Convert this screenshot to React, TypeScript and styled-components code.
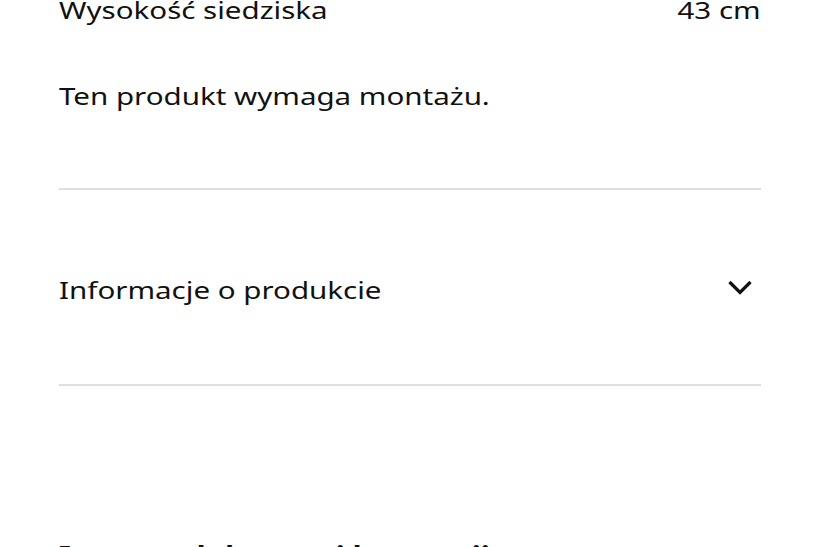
import React from "react";
import styled, { createGlobalStyle } from "styled-components";

const GlobalStyle = createGlobalStyle`
  html, body {
    margin: 0;
    padding: 0;
    background: #ffffff;
    overflow: hidden;
  }
  body {
    font-family: "Noto Sans", "Open Sans", sans-serif;
    color: #111111;
    -webkit-font-smoothing: antialiased;
  }
  * { box-sizing: border-box; }
`;

const Page = styled.div`
  width: 820px;
  height: 547px;
  overflow: hidden;
`;

const Content = styled.div`
  padding: 0 59px;
  margin-top: -8px;
  display: flex;
  flex-direction: column;
`;

/* The reference type is set slightly wide: stretch glyphs horizontally */
const Wide = styled.span<{ $origin?: "left" | "right" }>`
  display: inline-block;
  white-space: nowrap;
  transform: scaleX(1.23);
  transform-origin: ${(p) => p.$origin ?? "left"} center;
`;

const SpecRow = styled.div`
  display: flex;
  justify-content: space-between;
  align-items: baseline;
  font-size: 24px;
  line-height: 36px;
`;

const Note = styled.p`
  margin: 50px 0 0;
  font-size: 24px;
  line-height: 36px;
`;

const Divider = styled.hr<{ $top: number }>`
  margin: ${(p) => p.$top}px 0 0;
  border: none;
  height: 2px;
  background: #dfdfdf;
`;

const AccordionButton = styled.button`
  display: flex;
  align-items: center;
  justify-content: space-between;
  width: 100%;
  padding: 82px 0 76px;
  margin: 0;
  border: none;
  background: transparent;
  font-family: inherit;
  font-size: 24px;
  line-height: 36px;
  color: #111111;
  text-align: left;
  cursor: pointer;
`;

const ChevronWrap = styled.span`
  display: flex;
  width: 26px;
  height: 18px;
  margin-right: 8px;
  margin-top: -6px;
`;

const Heading = styled.h2`
  margin: 151px 0 0;
  font-size: 24.5px;
  line-height: 36px;
  font-weight: 700;
`;

const Chevron = () => (
  <svg width="26" height="18" viewBox="0 0 26 18" fill="none">
    <polyline
      points="2.5,4 13,14.5 23.5,4"
      stroke="#111111"
      strokeWidth="3.2"
      strokeLinecap="butt"
      strokeLinejoin="miter"
      fill="none"
    />
  </svg>
);

export default function App() {
  return (
    <Page>
      <GlobalStyle />
      <Content>
        <SpecRow>
          <Wide>Wysokość siedziska</Wide>
          <Wide $origin="right">43 cm</Wide>
        </SpecRow>
        <Note>
          <Wide>Ten produkt wymaga montażu.</Wide>
        </Note>
        <Divider $top={74} />
        <AccordionButton>
          <Wide>Informacje o produkcie</Wide>
          <ChevronWrap>
            <Chevron />
          </ChevronWrap>
        </AccordionButton>
        <Divider $top={0} />
        <Heading>
          <Wide>Inne produkty z tej kategorii</Wide>
        </Heading>
      </Content>
    </Page>
  );
}
